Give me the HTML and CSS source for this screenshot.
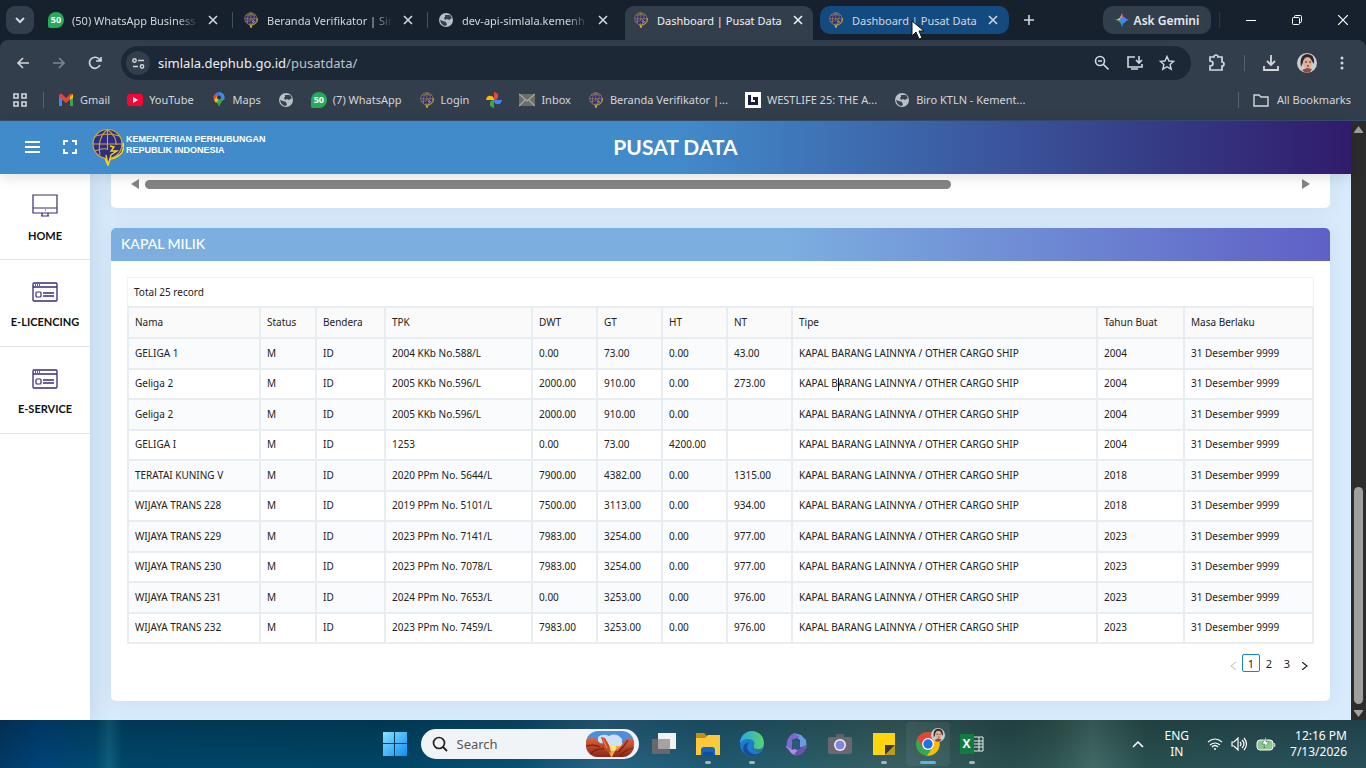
FILE: index.html
```html
<!DOCTYPE html>
<html lang="id">
<head>
  <meta charset="UTF-8">
  <meta name="viewport" content="width=device-width, initial-scale=1.0">
  <title>Dashboard | Pusat Data</title>
  <link rel="stylesheet" href="styles.css">
</head>
<body>
  <!-- Shared icons -->
  <svg class="sprite" aria-hidden="true">
    <symbol id="i-kemenhub" viewBox="0 0 32 38">
      <path d="M26 20q5-1 5-5 2 9-5 13-4 3-8 3l-2 6-3-7z" fill="#5b2a52" stroke="#f0d91d" stroke-width="1.6"/>
      <circle cx="15.500" cy="16" r="14.500" fill="#2f2c85" stroke="#c9a93f" stroke-width="1.200"/>
      <path d="M1 16h29M4 8q12-4 23 0M3 23q7-3 12-2M15.500 2v20M15 2Q5 10 8 27M16 2q9 7 8 15" fill="none" stroke="#c9a93f" stroke-width="1.100"/>
      <path d="M18 18l4 1-3 4 6 0-6 4-3 10-2-10" fill="#2f2c85" stroke="#f0d91d" stroke-width="1.300"/>
    </symbol>
    <symbol id="i-globe" viewBox="0 0 16 16">
      <circle cx="8" cy="8" r="7" fill="#b9bfc7"/>
      <path d="M7 3h5l2 3-3 2-2-1-2 1-1-2 1-1zM2 8l3 1 3 1 1 3-2 1q-4-1-5-6z" fill="#37424f"/>
    </symbol>
    <symbol id="i-close" viewBox="0 0 10 10"><path d="M1 1l8 8M9 1L1 9" fill="none" stroke="currentColor" stroke-width="1.6"/></symbol>
    <symbol id="i-window" viewBox="0 0 26 20">
      <rect x="1" y="1" width="24" height="18" rx="1" fill="none" stroke="#392c78" stroke-width="1.3"/>
      <path d="M1 5h24M3 3h1M5 3h1M7 3h1M11 11h11M11 14h11" stroke="#392c78" stroke-width="1.3"/>
      <rect x="4" y="10" width="5" height="5" rx="1" fill="none" stroke="#392c78" stroke-width="1.2"/>
    </symbol>
    <symbol id="i-avatar" viewBox="0 0 20 20">
      <circle cx="10" cy="10" r="10" fill="#c9cfca"/>
      <path d="M4 14Q2 2 10 1q8 0 7 10l-3-4-7 0z" fill="#30262a"/>
      <ellipse cx="10.500" cy="10" rx="4.500" ry="6" fill="#e2ae97"/>
      <path d="M5 17l5-2 5 1-2 3q-5 2-8-2z" fill="#8b4b40"/>
      <path d="M8 9h2M12 9h2M10 13h2" stroke="#3b2727"/>
    </symbol>
  </svg>

  <header class="browser">
    <div class="tab-strip">
      <button class="tab-search" aria-label="Search tabs"><svg width="10" height="8" viewBox="0 0 10 8"><path d="M1 2l4 4 4-4" fill="none" stroke="currentColor" stroke-width="2"/></svg></button>
      <div class="tab">
        <span class="favicon wa">50</span>
        <span class="tab-title">(50) WhatsApp Business</span>
        <button class="tab-close" aria-label="Close tab"><svg width="10" height="10"><use href="#i-close"/></svg></button>
      </div>
      <div class="tab">
        <svg class="favicon"><use href="#i-kemenhub"/></svg>
        <span class="tab-title">Beranda Verifikator | Sim</span>
        <button class="tab-close" aria-label="Close tab"><svg width="10" height="10"><use href="#i-close"/></svg></button>
      </div>
      <div class="tab no-line">
        <svg class="favicon"><use href="#i-globe"/></svg>
        <span class="tab-title">dev-api-simlala.kemenh</span>
        <button class="tab-close" aria-label="Close tab"><svg width="10" height="10"><use href="#i-close"/></svg></button>
      </div>
      <div class="tab active no-line">
        <svg class="favicon"><use href="#i-kemenhub"/></svg>
        <span class="tab-title">Dashboard | Pusat Data</span>
        <button class="tab-close" aria-label="Close tab"><svg width="10" height="10"><use href="#i-close"/></svg></button>
      </div>
      <div class="tab hovered no-line">
        <svg class="favicon"><use href="#i-kemenhub"/></svg>
        <span class="tab-title">Dashboard | Pusat Data</span>
        <button class="tab-close" aria-label="Close tab"><svg width="10" height="10"><use href="#i-close"/></svg></button>
        <svg class="cursor" width="14" height="20" viewBox="0 0 14 20"><path d="M1 1v15l4-4 3 7 3-1-3-7h5z" fill="#fff" stroke="#111" stroke-width="1"/></svg>
      </div>
      <button class="new-tab" aria-label="New tab"><svg width="12" height="12" viewBox="0 0 12 12"><path d="M6 1v10M1 6h10" stroke="currentColor" stroke-width="1.6"/></svg></button>
      <button class="gemini">
        <svg width="14" height="14" viewBox="0 0 14 14">
          <path d="M7 0Q8 6 14 7H7z" fill="#e9503f"/><path d="M14 7Q8 8 7 14V4z" fill="#4285f4"/>
          <path d="M7 14Q6 8 0 7h7z" fill="#34a853"/><path d="M0 7Q6 6 7 0v7z" fill="#f6bd2e"/>
          <circle cx="8" cy="7" r="3" fill="#4285f4"/>
        </svg>
        Ask Gemini
      </button>
      <div class="window-buttons">
        <button aria-label="Minimize"><svg width="10" height="10" viewBox="0 0 10 10"><path d="M0 5.500h10" stroke="#fff"/></svg></button>
        <button aria-label="Restore"><svg width="10" height="10" viewBox="0 0 10 10"><rect x="0.500" y="2.500" width="7" height="7" rx="1" fill="none" stroke="#fff"/><path d="M2.500 2V1.500q0-1 1-1h5q1 0 1 1v5q0 1-1.500 1" fill="none" stroke="#fff"/></svg></button>
        <button aria-label="Close"><svg width="10" height="10" viewBox="0 0 10 10"><path d="M0 0l10 10M10 0L0 10" stroke="#fff" stroke-width="1.2"/></svg></button>
      </div>
    </div>

    <div class="toolbar">
      <button aria-label="Back"><svg width="14" height="12" viewBox="0 0 14 12"><path d="M13 6H2M7 1L2 6l5 5" fill="none" stroke="currentColor" stroke-width="1.6"/></svg></button>
      <button aria-label="Forward" class="dim"><svg width="14" height="12" viewBox="0 0 14 12"><path d="M1 6h11M7 1l5 5-5 5" fill="none" stroke="currentColor" stroke-width="1.6"/></svg></button>
      <button aria-label="Reload"><svg width="14" height="14" viewBox="0 0 14 14"><path d="M12 9A5.500 5.500 0 1 1 11 3l1 2M13 1v4H8" fill="none" stroke="currentColor" stroke-width="1.7"/></svg></button>
      <div class="omnibox">
        <button class="site-info" aria-label="Site information"><svg width="13" height="11" viewBox="0 0 13 11"><g fill="none" stroke="currentColor" stroke-width="1.4"><circle cx="2.500" cy="2.500" r="1.700"/><path d="M6 2.500h6M1 8.500h5"/><circle cx="10" cy="8.500" r="1.700"/></g></svg></button>
        <span class="url">simlala.dephub.go.id<span>/pusatdata/</span></span>
        <button aria-label="Zoom"><svg width="16" height="16" viewBox="0 0 16 16"><g fill="none" stroke="currentColor" stroke-width="1.6"><circle cx="7" cy="6" r="4.500"/><path d="M10 9l5.500 5.500M5 6h4"/></g></svg></button>
        <button aria-label="Install app"><svg width="18" height="16" viewBox="0 0 18 16"><path d="M10 2H3v10h14V9M6 14h7M14 1v7M11 5l3 3 3-3" fill="none" stroke="currentColor" stroke-width="1.600"/></svg></button>
        <button aria-label="Bookmark this tab"><svg width="16" height="16" viewBox="0 0 16 16"><path d="M8 1.500l2 4.500 4.600.4-3.500 3.100 1.100 4.700L8 11.700l-4.200 2.500 1.100-4.700L1.400 6.400 6 6z" fill="none" stroke="currentColor" stroke-width="1.400"/></svg></button>
      </div>
      <div class="toolbar-end">
        <button aria-label="Extensions"><svg width="18" height="18" viewBox="0 0 18 18"><path d="M2 3h4q0-2 2-2t2 2h4v5q2 0 2 2t-2 2v4H2v-4q3 0 3-2.500T2 7z" fill="none" stroke="currentColor" stroke-width="1.700"/></svg></button>
        <span class="divider"></span>
        <button aria-label="Downloads"><svg width="16" height="16" viewBox="0 0 16 16"><path d="M8 0v10M4 6l4 4 4-4M1 11v4h14v-4" fill="none" stroke="currentColor" stroke-width="1.800"/></svg></button>
        <button aria-label="Profile"><svg width="20" height="20"><use href="#i-avatar"/></svg></button>
        <button aria-label="Menu" class="kebab"><svg width="4" height="14" viewBox="0 0 4 14" fill="currentColor"><circle cx="2" cy="2" r="1.500"/><circle cx="2" cy="7" r="1.500"/><circle cx="2" cy="12" r="1.500"/></svg></button>
      </div>
    </div>

    <nav class="bookmarks">
      <button aria-label="Apps"><svg width="14" height="14" viewBox="0 0 14 14"><g fill="none" stroke="currentColor" stroke-width="1.600"><path d="M1 1h4v4H1zM9 1h4v4H9zM1 9h4v4H1zM9 9h4v4H9z"/></g></svg></button>
      <span class="divider"></span>
      <a href="#"><svg viewBox="0 0 16 16"><path d="M1 14V3l3 2v9z" fill="#4285f4"/><path d="M12 14V5l3-2v11z" fill="#34a853"/><path d="M1 3q2-2 3-1l4 4 4-4q2-1 3 1v2L8 11 1 5z" fill="#ea4335"/><path d="M12 5l3-3v4l-3 2z" fill="#fbbc04"/></svg>Gmail</a>
      <a href="#"><svg viewBox="0 0 16 16"><rect y="2" width="16" height="12" rx="3" fill="#f03"/><path d="M6 5l5 3-5 3z" fill="#fff"/></svg>YouTube</a>
      <a href="#"><svg viewBox="0 0 16 16"><path d="M8 15Q7 11 4 9L8 5l5 2q-4 4-5 8z" fill="#34a853"/><path d="M8 0a5.500 5.500 0 0 1 5 8L8 6z" fill="#4285f4"/><path d="M4 2a5.500 5.500 0 0 1 5-2L6 6z" fill="#3b78e7"/><path d="M4 2Q1 5 3 8l4-4z" fill="#ea4335"/><path d="M3 8l4-5 2 3-4 5z" fill="#fbbc04"/><circle cx="8" cy="5.500" r="2" fill="#26323f"/></svg>Maps</a>
      <a href="#" aria-label="Globe"><svg><use href="#i-globe"/></svg></a>
      <a href="#"><span class="wa">50</span>(7) WhatsApp</a>
      <a href="#"><svg><use href="#i-kemenhub"/></svg>Login</a>
      <a href="#" aria-label="Photos"><svg viewBox="0 0 16 16"><path d="M8 8V0q5 1 4 5 0 3-4 3z" fill="#ea4335"/><path d="M8 8h8q-1 5-5 4-3 0-3-4z" fill="#4285f4"/><path d="M8 8v8q-5-1-4-5 0-3 4-3z" fill="#34a853"/><path d="M8 8H0q1-5 5-4 3 0 3 4z" fill="#fbbc04"/></svg></a>
      <a href="#"><svg viewBox="0 0 16 16"><rect x="0" y="2" width="16" height="12" fill="#6d6d6b"/><path d="M0 2l8 7 8-7M0 14l6-6M16 14l-6-6" fill="none" stroke="#a9a9a5" stroke-width="1.200"/></svg>Inbox</a>
      <a href="#"><svg><use href="#i-kemenhub"/></svg>Beranda Verifikator |...</a>
      <a href="#"><svg viewBox="0 0 16 16"><rect width="16" height="16" fill="#fff"/><path d="M3 3h3v7h4V8H8V5h5v8H3z" fill="#1b1b4b"/></svg>WESTLIFE 25: THE A...</a>
      <a href="#"><svg><use href="#i-globe"/></svg>Biro KTLN - Kement...</a>
      <span class="divider push"></span>
      <a href="#" class="all-bookmarks"><svg viewBox="0 0 16 16"><path d="M1 3h5l2 2h7v9H1z" fill="none" stroke="currentColor" stroke-width="1.400"/></svg>All Bookmarks</a>
    </nav>
  </header>

  <div class="viewport">
    <div class="site">
      <header class="topbar">
        <button aria-label="Menu"><svg width="16" height="12" viewBox="0 0 16 12"><path d="M1 1h15M1 6h15M1 11h15" stroke="#fff" stroke-width="2"/></svg></button>
        <button aria-label="Fullscreen"><svg width="16" height="16" viewBox="0 0 16 16"><path d="M6 2H2v4M10 2h4v4M6 14H2v-4M10 14h4v-4" fill="none" stroke="#fff" stroke-width="2"/></svg></button>
        <a href="#" class="brand">
          <svg width="32" height="38"><use href="#i-kemenhub"/></svg>
          <span>KEMENTERIAN PERHUBUNGAN<br>REPUBLIK INDONESIA</span>
        </a>
        <h1>PUSAT DATA</h1>
      </header>

      <div class="layout">
        <nav class="sidebar">
          <a href="#">
            <svg width="26" height="24" viewBox="0 0 26 24"><path d="M1 1h24v18H1zM1 14h24M10 19v3M16 19v3M9 22h8M13 16h1" fill="none" stroke="#392c78" stroke-width="1.200"/></svg>
            HOME
          </a>
          <a href="#"><svg width="26" height="24"><use href="#i-window"/></svg>E-LICENCING</a>
          <a href="#"><svg width="26" height="24"><use href="#i-window"/></svg>E-SERVICE</a>
        </nav>

        <main class="content">
          <section class="card card-scroll">
            <div class="h-scroll">
              <svg width="8" height="10" viewBox="0 0 8 10"><path d="M8 0v10L0 5z" fill="#858585"/></svg>
              <div class="h-track"><div class="h-thumb"></div></div>
              <svg width="8" height="10" viewBox="0 0 8 10"><path d="M0 0v10l8-5z" fill="#858585"/></svg>
            </div>
          </section>

          <section class="card">
            <h2>KAPAL MILIK</h2>
            <div class="card-body">
              <div class="table-title">Total 25 record</div>
              <table>
                <colgroup>
                  <col class="c-nama"><col class="c-status"><col class="c-bendera"><col class="c-tpk">
                  <col class="c-num"><col class="c-num"><col class="c-num"><col class="c-num">
                  <col><col class="c-tahun"><col class="c-masa">
                </colgroup>
                <thead>
                  <tr><th>Nama</th><th>Status</th><th>Bendera</th><th>TPK</th><th>DWT</th><th>GT</th><th>HT</th><th>NT</th><th>Tipe</th><th>Tahun Buat</th><th>Masa Berlaku</th></tr>
                </thead>
                <tbody>
                  <tr><td>GELIGA 1</td><td>M</td><td>ID</td><td>2004 KKb No.588/L</td><td>0.00</td><td>73.00</td><td>0.00</td><td>43.00</td><td>KAPAL BARANG LAINNYA / OTHER CARGO SHIP</td><td>2004</td><td>31 Desember 9999</td></tr>
                  <tr><td>Geliga 2</td><td>M</td><td>ID</td><td>2005 KKb No.596/L</td><td>2000.00</td><td>910.00</td><td>0.00</td><td>273.00</td><td>KAPAL B<span class="caret"></span>ARANG LAINNYA / OTHER CARGO SHIP</td><td>2004</td><td>31 Desember 9999</td></tr>
                  <tr><td>Geliga 2</td><td>M</td><td>ID</td><td>2005 KKb No.596/L</td><td>2000.00</td><td>910.00</td><td>0.00</td><td></td><td>KAPAL BARANG LAINNYA / OTHER CARGO SHIP</td><td>2004</td><td>31 Desember 9999</td></tr>
                  <tr><td>GELIGA I</td><td>M</td><td>ID</td><td>1253</td><td>0.00</td><td>73.00</td><td>4200.00</td><td></td><td>KAPAL BARANG LAINNYA / OTHER CARGO SHIP</td><td>2004</td><td>31 Desember 9999</td></tr>
                  <tr><td>TERATAI KUNING V</td><td>M</td><td>ID</td><td>2020 PPm No. 5644/L</td><td>7900.00</td><td>4382.00</td><td>0.00</td><td>1315.00</td><td>KAPAL BARANG LAINNYA / OTHER CARGO SHIP</td><td>2018</td><td>31 Desember 9999</td></tr>
                  <tr><td>WIJAYA TRANS 228</td><td>M</td><td>ID</td><td>2019 PPm No. 5101/L</td><td>7500.00</td><td>3113.00</td><td>0.00</td><td>934.00</td><td>KAPAL BARANG LAINNYA / OTHER CARGO SHIP</td><td>2018</td><td>31 Desember 9999</td></tr>
                  <tr><td>WIJAYA TRANS 229</td><td>M</td><td>ID</td><td>2023 PPm No. 7141/L</td><td>7983.00</td><td>3254.00</td><td>0.00</td><td>977.00</td><td>KAPAL BARANG LAINNYA / OTHER CARGO SHIP</td><td>2023</td><td>31 Desember 9999</td></tr>
                  <tr><td>WIJAYA TRANS 230</td><td>M</td><td>ID</td><td>2023 PPm No. 7078/L</td><td>7983.00</td><td>3254.00</td><td>0.00</td><td>977.00</td><td>KAPAL BARANG LAINNYA / OTHER CARGO SHIP</td><td>2023</td><td>31 Desember 9999</td></tr>
                  <tr><td>WIJAYA TRANS 231</td><td>M</td><td>ID</td><td>2024 PPm No. 7653/L</td><td>0.00</td><td>3253.00</td><td>0.00</td><td>976.00</td><td>KAPAL BARANG LAINNYA / OTHER CARGO SHIP</td><td>2023</td><td>31 Desember 9999</td></tr>
                  <tr><td>WIJAYA TRANS 232</td><td>M</td><td>ID</td><td>2023 PPm No. 7459/L</td><td>7983.00</td><td>3253.00</td><td>0.00</td><td>976.00</td><td>KAPAL BARANG LAINNYA / OTHER CARGO SHIP</td><td>2023</td><td>31 Desember 9999</td></tr>
                </tbody>
              </table>
              <div class="pagination">
                <button disabled aria-label="Previous page"><svg width="6" height="8" viewBox="0 0 6 8"><path d="M6 0L1 4l5 4" fill="none" stroke="currentColor"/></svg></button>
                <button class="current">1</button>
                <button>2</button>
                <button>3</button>
                <button aria-label="Next page"><svg width="6" height="8" viewBox="0 0 6 8"><path d="M0 0l5 4-5 4" fill="none" stroke="currentColor" stroke-width="1.200"/></svg></button>
              </div>
            </div>
          </section>
        </main>
      </div>
    </div>

    <div class="v-scroll">
      <svg width="9" height="8" viewBox="0 0 9 8"><path d="M4.500 0L9 6v1H0V6z" fill="#9f9f9f"/></svg>
      <div class="v-track"><div class="v-thumb"></div></div>
      <svg width="9" height="8" viewBox="0 0 9 8"><path d="M0 1h9v1L4.500 8 0 2z" fill="#9f9f9f"/></svg>
    </div>
  </div>

  <footer class="taskbar">
    <div class="task-apps">
      <button aria-label="Start">
        <svg width="24" height="24" viewBox="0 0 24 24">
          <defs><linearGradient id="g-win" x1="0" y1="0" x2="24" y2="24" gradientUnits="userSpaceOnUse"><stop offset="0" stop-color="#8ae0ff"/><stop offset="1" stop-color="#0d8ff2"/></linearGradient></defs>
          <path d="M0 0h11v11H0zM12 0h12v11H12zM0 12h11v12H0zM12 12h12v12H12z" fill="url(#g-win)"/>
        </svg>
      </button>
      <label class="search">
        <svg width="16" height="16" viewBox="0 0 16 16"><circle cx="7" cy="7" r="5.500" fill="none" stroke="#222" stroke-width="1.700"/><path d="M11 11l4 4" stroke="#222" stroke-width="1.800"/></svg>
        <input type="text" placeholder="Search" aria-label="Search">
        <svg width="48" height="26" viewBox="0 0 48 26">
          <defs>
            <clipPath id="c-pill"><rect width="48" height="26" rx="12"/></clipPath>
            <linearGradient id="g-rock" x1="0" y1="0" x2="0" y2="1"><stop offset="0" stop-color="#e0673a"/><stop offset="1" stop-color="#8c2618"/></linearGradient>
          </defs>
          <g clip-path="url(#c-pill)">
            <rect width="48" height="26" fill="#4d8fdc"/>
            <path d="M12 6q5-4 11-1 7-4 13 3v12H12z" fill="#cfe2f5"/>
            <path d="M15 15h20v11H15z" fill="#f4a83c"/>
            <circle cx="27" cy="17" r="3" fill="#ffe682"/>
            <path d="M0 9l5-3 5 2 4 4 6 1 3 8 2 5H0z" fill="url(#g-rock)"/>
            <path d="M15 6l4 1 4 7 2 8-6-3z" fill="#c94a26"/>
            <path d="M48 9l-5-2-5 3-2 4-7 6-3 6h22z" fill="url(#g-rock)"/>
            <path d="M0 15q9-2 14 1M4 24q5-7 14-6M42 9q-4 7-10 12M48 17q-8 1-14 8" fill="none" stroke="#7a2016" stroke-width="1.200"/>
            <path d="M17 8l4 9M37 12l-6 8" stroke="#f7935a"/>
          </g>
        </svg>
      </label>
      <button aria-label="Task view"><svg width="24" height="22" viewBox="0 0 24 22"><rect x="6" width="18" height="16" fill="#f1f2f2"/><path d="M0 6h18v15H0z" fill="#68686a"/><path d="M6 6h12v10H6z" fill="#a3a3a3"/></svg></button>
      <button aria-label="File Explorer" class="open"><svg width="26" height="24" viewBox="0 0 26 24"><path d="M1 1h8l3 3v5H1z" fill="#c78c14"/><path d="M1 6h9l3-3h12v20H1z" fill="#fcc93d"/><path d="M6 23v-5q0-3 3-3h8q3 0 3 3v5z" fill="#1565c0"/><path d="M8 20h10v3H8z" fill="#0d4f9e"/></svg></button>
      <button aria-label="Edge" class="open">
        <svg width="26" height="26" viewBox="0 0 26 26">
          <defs><linearGradient id="g-edge"><stop offset="0" stop-color="#2aa6e8"/><stop offset="1" stop-color="#56d36a"/></linearGradient></defs>
          <circle cx="13" cy="13" r="12" fill="#1b7cd0"/>
          <path d="M1 12A12 12 0 0 1 25 12q0 6-6 6-5 0-4-3 2-7-6-7-5 0-8 4z" fill="url(#g-edge)"/>
          <path d="M9 12q-3 6 3 10 5 3 10-1-4 5-11 4-7-2-7-8 1-5 7-6z" fill="#124f93"/>
          <path d="M14 15q0 4 5 4 3 0 6-2l-3 4q-8 1-9-6z" fill="#33718f"/>
        </svg>
      </button>
      <button aria-label="Copilot">
        <svg width="24" height="26" viewBox="0 0 24 26">
          <path d="M10 2l7 2 5 5q1 5 0 9l-6-2V9l-6-4z" fill="#6d9be3"/>
          <path d="M10 2Q4 5 3 11l-1 6 6 2V9l8-3z" fill="#7d68cc"/>
          <path d="M2 15l5 7q5 4 9 1l-4-6-4 2z" fill="#b18dea"/>
          <path d="M22 14q0 5-3 8-5 4-9 1l6-6z" fill="#6a52ae"/>
          <path d="M8 10l4-2 4 3v5l-4 3-4-3z" fill="#2c5a74"/>
        </svg>
      </button>
      <button aria-label="Camera"><svg width="24" height="20" viewBox="0 0 24 20"><rect x="8" y="0" width="8" height="4" fill="#5f5f66"/><rect y="3" width="24" height="17" rx="2" fill="#6b6670"/><circle cx="12" cy="11" r="6" fill="#f2f0f6"/><circle cx="12" cy="11" r="4.500" fill="#7d86e0"/></svg></button>
      <button aria-label="Sticky Notes" class="open"><svg width="24" height="24" viewBox="0 0 24 24"><path d="M1 1h22v12L13 23H1z" fill="#fdd60f"/><path d="M13 23V13h10z" fill="#373737"/><path d="M23 13v10H13z" fill="#b89c1d"/></svg></button>
      <button aria-label="Chrome" class="open selected">
        <svg width="26" height="26" viewBox="0 0 24 24">
          <circle cx="12" cy="12" r="11" fill="#34a853"/>
          <path d="M2 7A11 11 0 0 1 22 8H12l-5 7z" fill="#ea4335"/>
          <path d="M11 23A11 11 0 0 0 22 8h-9l4 6z" fill="#fbbc04"/>
          <circle cx="12" cy="12" r="5.500" fill="#fff"/><circle cx="12" cy="12" r="4.300" fill="#1a73e8"/>
        </svg>
        <svg class="badge" width="14" height="14"><use href="#i-avatar"/></svg>
      </button>
      <button aria-label="Excel" class="open"><span class="excel">X</span><svg width="10" height="16" viewBox="0 0 10 16"><path d="M0 1h9v14H0M0 5h9M0 8h9M0 11h9M5 1v14" fill="none" stroke="#e3efe7"/></svg></button>
    </div>
    <div class="tray">
      <svg width="12" height="8" viewBox="0 0 12 8"><path d="M1 7l5-5 5 5" fill="none" stroke="#fff" stroke-width="1.500"/></svg>
      <div class="lang">ENG<br>IN</div>
      <div class="status">
        <svg width="16" height="12" viewBox="0 0 16 12"><path d="M1 4q7-6 14 0M3 7q5-4 10 0M5 9q3-3 6 0" fill="none" stroke="#fff" stroke-width="1.200"/><circle cx="8" cy="11" r="1" fill="#fff"/></svg>
        <svg width="17" height="14" viewBox="0 0 17 14"><path d="M1 5h2l4-4v12L3 9H1zM9 5q2 2 0 4M11 3q4 4 0 8M13 1q5 6 0 12" fill="none" stroke="#fff" stroke-width="1.200"/></svg>
        <svg width="20" height="14" viewBox="0 0 20 14"><rect x="1" y="3" width="16" height="10" rx="3" fill="#8bc98e" stroke="#fff"/><path d="M18 6q2 2 0 4" fill="none" stroke="#fff"/><path d="M10 0L6 7h3l-1 4 5-6h-3z" fill="#fff" stroke="#2c5650" stroke-width=".5"/></svg>
      </div>
      <div class="clock">12:16 PM<br>7/13/2026</div>
    </div>
  </footer>
</body>
</html>
```
FILE: styles.css
```css
:root {
  --strip: #17212e; --chrome: #333e4d; --omnibox: #1d2837; --chrome-text: #d3d7dc;
  --page-bg: #d7ebfc; --line: #e8edf1; --ui: "Noto Sans", "Open Sans", sans-serif;
}
*, *:before, *:after { box-sizing: border-box; }
body {
  margin: 0; height: 100vh; display: flex; flex-direction: column; overflow: hidden;
  font-family: var(--ui); font-size: 11px; color: #222;
}
button { border: 0; padding: 0; background: none; font: inherit; color: inherit; display: flex; align-items: center; justify-content: center; }
a { color: inherit; text-decoration: none; }
svg { display: block; flex-shrink: 0; }
.sprite { display: none; }

/* Browser chrome */
.browser { background: var(--strip); color: var(--chrome-text); flex-shrink: 0; border-bottom: 1px solid #34506f; }
.tab-strip { height: 40px; display: flex; align-items: center; padding-left: 6px; }
.tab-search { width: 28px; height: 28px; border-radius: 9px; background: var(--chrome); margin-right: 5px; }
.tab { position: relative; width: 195px; height: 28px; display: flex; align-items: center; padding: 0 16px 0 9px; }
.tab:after { content: ""; position: absolute; right: 1px; top: 6px; width: 1px; height: 16px; background: #43505f; }
.tab.no-line:after { display: none; }
.favicon { width: 16px; height: 16px; margin-right: 8px; }
.wa {
  width: 16px; height: 16px; flex-shrink: 0; border-radius: 8px 8px 8px 2px; background: #25ac5b; color: #fff;
  font: bold 9px/16px "Open Sans", sans-serif; text-align: center;
}
.tab-title {
  flex: 1; min-width: 0; overflow: hidden; white-space: nowrap; margin-right: 2px;
  mask-image: linear-gradient(90deg, #000 78%, transparent 94%);
}
.tab.active .tab-title, .tab.hovered .tab-title { mask-image: none; }
.tab.active { color: #eef1f4; }
.tab.active:before {
  content: ""; position: absolute; left: 1px; right: 6px; top: 0; height: 34px;
  background: var(--chrome); border-radius: 9px 9px 0 0;
}
.tab.active > * { position: relative; }
.tab.hovered { width: 189px; margin: 0 6px 0 1px; padding: 0 11px 0 8px; background: #134a80; border-radius: 10px; }
.tab.hovered .cursor { position: absolute; left: 91px; top: 14px; }
.new-tab { width: 28px; height: 28px; }
.gemini { width: 108px; height: 28px; margin-left: auto; border-radius: 10px; background: var(--chrome); font-weight: 600; font-size: 12px; gap: 5px; color: #e6e9ed; }
.window-buttons { display: flex; margin-left: 8px; border-left: 1px solid #2c3745; height: 16px; padding-left: 8px; }
.window-buttons button { width: 46px; }

.toolbar { height: 46px; display: flex; align-items: center; padding-left: 5px; border-radius: 8px 8px 0 0; background: var(--chrome); }
.toolbar > button { width: 36px; height: 28px; }
.dim { color: #7b8694; }
.omnibox {
  flex: 1; height: 34px; margin-left: 8px; border-radius: 17px; background: var(--omnibox);
  display: flex; align-items: center; padding: 0 16px 0 5px; gap: 16px;
}
.site-info { width: 24px; height: 24px; border-radius: 12px; background: var(--chrome); }
.url { flex: 1; font-size: 13px; color: #eef0f3; margin-left: -8px; }
.url span { color: #bcc3cb; }
.toolbar-end { display: flex; align-items: center; padding: 0 22px 0 17px; gap: 18px; }
.kebab { margin-left: 5px; }
.divider { width: 1px; height: 16px; background: #566272; }

.bookmarks { height: 34px; display: flex; align-items: center; padding: 0 15px 6px 13px; gap: 17px; white-space: nowrap; background: var(--chrome); }
.bookmarks .divider { margin: 0 -3px 0 -1px; }
.bookmarks a { display: flex; align-items: center; gap: 6px; line-height: 16px; }
.bookmarks a svg { width: 16px; height: 16px; }
.bookmarks .push { margin-left: auto; }
.bookmarks .all-bookmarks { gap: 8px; }

/* Page */
.viewport { flex: 1; min-height: 0; display: flex; }
.site { flex: 1; min-width: 0; display: flex; flex-direction: column; background: var(--page-bg); }
.topbar {
  position: relative; z-index: 1; height: 53px; flex-shrink: 0; display: flex; align-items: center; padding: 0 0 2px 24px; gap: 22px;
  background: linear-gradient(90deg, #428bca 50%, #311b6b); color: #fff; box-shadow: 0 2px 14px rgba(0, 0, 0, 0.15);
}
.brand { display: flex; align-items: center; gap: 2px; margin-left: -8px; font: bold 9px/11px "Liberation Sans", Arial, sans-serif; }
.brand span { padding-bottom: 3px; }
.topbar h1 { position: absolute; left: 0; right: 0; text-align: center; margin: 0; font: bold 21px/24px Lato, sans-serif; pointer-events: none; }
.layout { flex: 1; min-height: 0; display: flex; }
.sidebar { width: 90px; background: #fff; box-shadow: 0 0 20px rgba(60, 80, 110, 0.18); }
.sidebar a {
  height: 87px; display: flex; flex-direction: column; align-items: center; padding-top: 20px; gap: 11px;
  border-bottom: 1px solid #dfe3ea; font: bold 11px/14px Lato, sans-serif; color: #111;
}
.sidebar a:first-child { height: 86px; }
.content { flex: 1; min-width: 0; padding: 0 21px; }
.card { background: #fff; border-radius: 5px; box-shadow: 0 0 20px rgba(60, 80, 110, 0.08); overflow: hidden; margin-bottom: 20px; }
.card-scroll { height: 34px; border-radius: 0 0 5px 5px; padding: 0 20px; }
.h-scroll { display: flex; align-items: center; height: 20px; gap: 6px; }
.h-track { flex: 1; }
.h-thumb { width: 70%; height: 9px; border-radius: 5px; background: #858585; }
.card h2 {
  margin: 0; height: 33px; padding: 0 10px; color: #fff; font: 500 14px/32px Lato, sans-serif;
  background: linear-gradient(90deg, #7cafe0 55%, #5f60c6);
}
.card-body { padding: 16px 16px 29px; }
.table-title { height: 29px; line-height: 28px; padding-left: 6px; border: 1px solid #f0f2f4; border-bottom: 0; font-size: 10px; }
table { width: 100%; table-layout: fixed; border-collapse: collapse; font-size: 10px; line-height: 16px; }
th, td { height: 31px; padding: 0 6px 2px; text-align: left; font-weight: 400; border: 2px solid var(--line); white-space: nowrap; }
th { background: #fafafa; }
tbody tr:nth-child(odd) td { background: #f9fbfd; }
tbody tr:nth-child(even) td { height: 30px; }
.c-nama { width: 132px; } .c-status { width: 56px; } .c-bendera { width: 69px; } .c-tpk { width: 147px; }
.c-num { width: 65px; } .c-tahun { width: 87px; } .c-masa { width: 129px; }
.caret { display: inline-block; width: 1px; height: 13px; margin-right: -1px; background: #000; vertical-align: middle; }
.pagination { display: flex; justify-content: flex-end; margin-top: 10px; }
.pagination button { width: 18px; height: 18px; }
.pagination .current { border: 1px solid #1b80cf; border-radius: 2px; background: #fff; }
.pagination svg { margin-top: 5px; }
.pagination button:disabled { color: #bbb; }

.v-scroll { width: 15px; background: #2c2c2c; display: flex; flex-direction: column; align-items: center; padding: 5px 0 3px; }
.v-track { flex: 1; width: 9px; display: flex; flex-direction: column; justify-content: flex-end; padding-bottom: 5px; }
.v-thumb { height: 38%; border-radius: 5px; background: #9f9f9f; }

/* Windows taskbar */
.taskbar {
  height: 48px; flex-shrink: 0; display: grid; grid-template-columns: 1fr auto 1fr; align-items: center; color: #fff;
  background:
    linear-gradient(rgba(0, 0, 0, 0.2), transparent),
    linear-gradient(90deg, #023a66, #004379 3%, #00496f 7%, #0e607f 8%, #00466a 9%, #004565 28%, #0a4f72 38%, #286484 44%, #1f5a72 52%, #2b5d68 60%, #3a5f60 66%, #284e4e 74%, #2f5652 77%, #426a66 80%, #28504f 84%, #295158 92%, #28505b);
}
.task-apps { grid-column: 2; display: flex; align-items: center; }
.task-apps button { position: relative; width: 44px; height: 44px; }
.open:after { content: ""; position: absolute; bottom: 2px; left: 19px; width: 6px; height: 3px; border-radius: 2px; background: #a7b4b8; }
.task-apps .selected { background: rgba(255, 255, 255, 0.06); border-radius: 4px; }
.selected:after { left: 14px; width: 16px; background: #5bb4e8; }
.badge { position: absolute; top: 6px; right: 5px; }
.excel { background: #107c41; width: 14px; height: 20px; font: bold 12px/20px "Open Sans", sans-serif; }
.search { width: 218px; height: 30px; margin: 0 3px 0 4px; border-radius: 15px; background: #f1f4f7; display: flex; align-items: center; padding: 0 5px 0 11px; gap: 9px; }
.search input { flex: 1; min-width: 0; border: 0; padding: 0; background: none; outline: none; font: 13px var(--ui); }
.search input::placeholder { color: #555; }
.tray { grid-column: 3; display: flex; align-items: center; justify-content: flex-end; padding-right: 19px; line-height: 16px; font-size: 12px; }
.lang { text-align: center; margin: 0 18px 0 20px; }
.status { display: flex; align-items: center; gap: 8px; margin-right: 14px; }
.clock { text-align: right; }
```
